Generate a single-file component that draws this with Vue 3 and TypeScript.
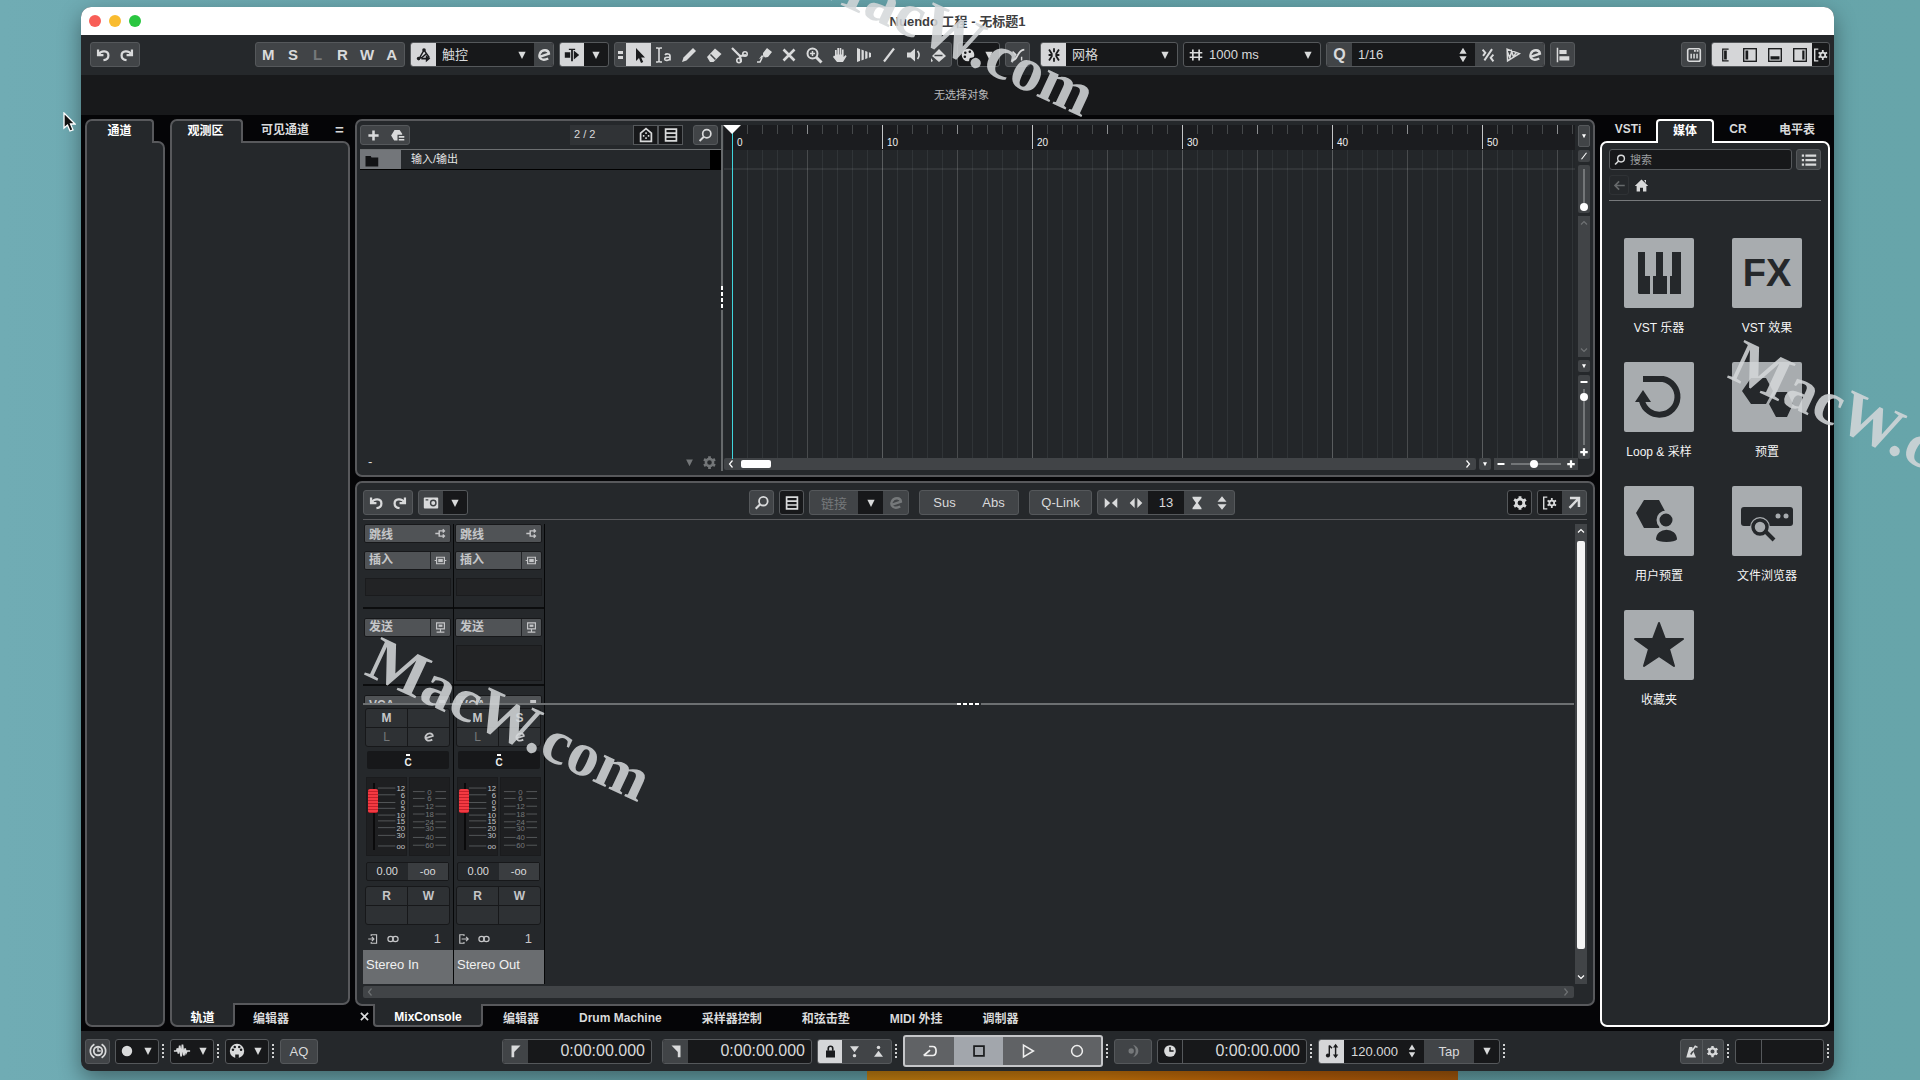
<script setup lang="ts">
import { h, ref } from 'vue'

const icons: Record<string, string> = {
  undo: '<path d="M4.500 4v6h6M5.200 9.400C8 4.500 16 5 16 10.500c0 3.200-2.200 4.800-5.500 5.200" fill="none" stroke="currentColor" stroke-width="2.500"/>',
  redo: '<path d="M15.500 4v6h-6M14.800 9.400C12 4.500 4 5 4 10.500c0 3.200 2.200 4.800 5.500 5.200" fill="none" stroke="currentColor" stroke-width="2.500"/>',
  down: '<path d="M6 6.500h8l-4 8z"/>',
  updown: '<path d="M10 2l4 6.500H6zM10 18l4-6.500H6z"/>',
  auto: '<path d="M4 15 10 4.500 16 13M3 13.500c5 1.500 7-3 9.500-5" fill="none" stroke="currentColor" stroke-width="1.600"/><circle cx="4" cy="14" r="2"/><circle cx="10" cy="4.500" r="2"/><path d="m12 10 5 4-5 4z"/><path d="M7 13h6v2H7z"/>',
  edit: '<path d="M5 12 15.500 8.500C15 3.800 8 3.300 5.500 8.200c-2.300 5 2.500 9.300 9.200 5.600" fill="none" stroke="currentColor" stroke-width="2.600"/>',
  scroll: '<path d="M9 3h2v14H9zM6.500 3h7v1.500h-7zM2 7h6v6H2zM12 5l6 5-6 5z"/>',
  pointer: '<path d="M7 3v13l3-3 2 5 2.200-1-2-4.500H16z"/>',
  rangetool: '<path d="M2 3h2l1 1 1-1h2M2 17h2l1-1 1 1h2M5 4v12" fill="none" stroke="currentColor" stroke-width="1.600"/><path d="M11 10c1-1.500 5-1.500 5 1v4.500M16 12c-4 0-5.500.8-5.300 2.200.4 2 4.300 1.500 5.300-.7" fill="none" stroke="currentColor" stroke-width="1.700"/>',
  pencil: '<path d="m3 17 1.500-4.500L14 3l3 3-9.500 9.500z"/>',
  eraser: '<path d="m3 12 8-8.500L17.500 9l-8 8H6z"/><path d="m6.500 9.500 5 5" stroke="#414447" stroke-width="1.500"/>',
  scissors: '<path d="M3 3l8 8 6-1M11 11l1 6" stroke="currentColor" stroke-width="2.200" fill="none"/><circle cx="16" cy="9" r="2.200" fill="none" stroke="currentColor" stroke-width="1.600"/><circle cx="10" cy="15.500" r="2.200" fill="none" stroke="currentColor" stroke-width="1.600"/>',
  glue: '<path d="m9 8 4-5 5 4-4 5-3 .5-2-2zM8 10l2 2-5 2z"/><path d="M3 17h3l2-4" stroke="currentColor" stroke-width="1.600" fill="none"/>',
  cross: '<path d="m4.500 4.500 11 11m0-11-11 11" stroke="currentColor" stroke-width="2.600"/>',
  zoom: '<circle cx="8.500" cy="8.500" r="5" fill="none" stroke="currentColor" stroke-width="2"/><path d="M12 12l5.500 5.500" stroke="currentColor" stroke-width="3"/><path d="M6 8.500h5M8.500 6v5" stroke="currentColor" stroke-width="1.500"/>',
  hand: '<path d="M6 11V5h1.700v4.500h.6V3H10v6.500h.6V3h1.700v6.500h.6V4.500h1.700V12l2-2 1 1.300-3.600 5.700H8L4 12l1-1.500z"/>',
  comp: '<path d="M3 3l14 5v4L3 17z"/><path d="M6.800 3v14M10.500 4v12M14.200 5v10" stroke="#414447" stroke-width="1.400"/>',
  line: '<path d="m5 16.500 10-13" stroke="currentColor" stroke-width="2.200"/>',
  speaker: '<path d="M3 7.500h3.500L11 3.500v13l-4.500-4H3z"/><path d="M13.500 6c2 2.500 2 5.500 0 8" fill="none" stroke="currentColor" stroke-width="1.600"/>',
  bucket: '<path d="m3 11 7-7 7 7-7 6zM2 13v4l2-1z"/><path d="M5.500 10.500h8" stroke="#414447" stroke-width="1.500"/>',
  palette: '<path d="M10 3a7 7 0 1 0 0 14c2 0 1-2.500 2-3.500s5 .5 5-3.500-3-7-7-7z"/><circle cx="7" cy="7.500" r="1.400" fill="#17181a"/><circle cx="12" cy="6.500" r="1.400" fill="#17181a"/><circle cx="6.500" cy="12" r="1.400" fill="#17181a"/>',
  curve: '<path d="M3 16c8 0 5-11 14-12" fill="none" stroke="currentColor" stroke-width="2"/><path d="M4 6l4 4M14 12v4" stroke="currentColor" stroke-width="1.600"/>',
  snap: '<path d="M10 2.500v4.500m0 6v4.500M4.500 4l3 4.500v3l-3 4.500M15.500 4l-3 4.500v3l3 4.500M4 10h4m4 0h4" fill="none" stroke="currentColor" stroke-width="2"/>',
  hash: '<path d="M6.500 4v12M13.500 4v12M3 7.500h14M3 12.500h14" stroke="currentColor" stroke-width="1.900"/>',
  swing: '<path d="m6 16 8.500-12.500M4 4l3 3.500L4.500 11M16 9.500 13 13l3 4" fill="none" stroke="currentColor" stroke-width="2.200"/>',
  soft: '<path d="M3.500 3.500 17 8.500 9 13.500 4 16.500zM3.500 6l3 7 2-7 2 6 3-5" fill="none" stroke="currentColor" stroke-width="1.700"/>',
  align: '<path d="M3 2h1.700v16H3zM6 4.500h8V9H6zM6 11.500h11V16H6z"/>',
  keys: '<rect x="3" y="3" width="14" height="14" rx="2" fill="none" stroke="currentColor" stroke-width="1.800"/><path d="M6 8.500h1.700V14H6zM9.200 8.500h1.700V14H9.200zM12.500 8.500h1.700V14h-1.700zM10 4.500h2v2h-2zM13 4.500h2v2h-2z"/>',
  zoneA: '<path d="M14 3.500H7.500v13H14" fill="none" stroke="currentColor" stroke-width="1.400"/><path d="M9 5h3v10H9z"/>',
  zoneB: '<rect x="3" y="3" width="14" height="14" fill="none" stroke="currentColor" stroke-width="1.500"/><path d="M5 5h3v10H5z"/>',
  zoneC: '<rect x="3" y="3" width="14" height="14" fill="none" stroke="currentColor" stroke-width="1.500"/><path d="M5 11.500h10V15H5z"/>',
  zoneD: '<rect x="3" y="3" width="14" height="14" fill="none" stroke="currentColor" stroke-width="1.500"/><path d="M12.500 5H15v10h-2.500z"/>',
  setup: '<path d="M7 3.500H3v13h4" fill="none" stroke="currentColor" stroke-width="1.600"/><circle cx="12" cy="10" r="2.700" fill="none" stroke="currentColor" stroke-width="2"/><path d="M12 4.500v2.500M12 13v2.500M7.300 7.300l2.100 1.200M14.600 11.500l2.100 1.200M7.300 12.700l2.100-1.200M14.600 8.500l2.100-1.200" stroke="currentColor" stroke-width="2"/>',
  gear: '<circle cx="10" cy="10" r="4.200" fill="none" stroke="currentColor" stroke-width="3"/><path d="M10 2.500v3M10 14.500v3M3.500 6.200l2.600 1.600M13.900 12.200l2.600 1.600M3.500 13.800l2.600-1.600M13.900 7.800l2.600-1.600" stroke="currentColor" stroke-width="3.200"/>',
  plus: '<path d="M10 4v12M4 10h12" stroke="currentColor" stroke-width="3"/>',
  minus: '<path d="M3 10h14" stroke="currentColor" stroke-width="4"/>',
  plusBold: '<path d="M10 2.500v15M2.500 10h15" stroke="currentColor" stroke-width="4.500"/>',
  preset: '<path d="M6.500 3.500h6L15.500 8v1H10v7H6L2.500 10z"/><path d="M11.500 10.500H18v2h-6.500zM11.500 14H18v2h-6.500z"/>',
  agent: '<path d="M4 17V8l6-5 6 5v9z" fill="none" stroke="currentColor" stroke-width="1.900"/><path d="M9.200 7h1.700v2H9.200zM6.500 10h1.700v2H6.500zM9.200 12.500h1.700v2H9.200zM12 10h1.700v2H12z"/>',
  list: '<path d="M4 3.500h12v13H4zM4 7.800h12M4 12.200h12" fill="none" stroke="currentColor" stroke-width="1.900"/>',
  search: '<circle cx="11.500" cy="8" r="4.800" fill="none" stroke="currentColor" stroke-width="2"/><path d="m8 11.500-5 5" stroke="currentColor" stroke-width="2.300"/>',
  folder: '<path d="M2 4h7l1 2h9v12H2z"/>',
  bullets: '<path d="M2 4h2.500v2.500H2zM2 9h2.500v2.500H2zM2 14h2.500v2.500H2zM6 4h12v2.500H6zM6 9h12v2.500H6zM6 14h12v2.500H6z"/>',
  back: '<path d="M17 10H4M9.500 4.500 4 10l5.500 5.500" fill="none" stroke="currentColor" stroke-width="2.200"/>',
  home: '<path d="m10 2 9 8.500h-2.500V18H12v-5H8v5H3.500v-7.500H1zM13.500 2.500H16V7z"/>',
  camera: '<rect x="2" y="4" width="16" height="12" rx="1"/><circle cx="12.500" cy="10" r="3" fill="none" stroke="#414447" stroke-width="1.600"/><path d="M4 6.500h3" stroke="#414447" stroke-width="1.500"/>',
  narrow: '<path d="M3 4.500 9 10l-6 5.500zM17 4.500 11 10l6 5.500z"/>',
  widen: '<path d="M8.500 4.500v11L3 10zM11.500 4.500v11L17 10z"/>',
  shrink: '<path d="M5 3h10v1.500L11 10l4 5.500V17H5v-1.500L9 10 5 4.500z"/>',
  grow: '<path d="M10 2.500 15 8.500H5zM10 17.500l5-6H5z"/>',
  expand: '<path d="M5.500 4.500h10v10M15 5 5 15.500" fill="none" stroke="currentColor" stroke-width="2.800"/>',
  route: '<path d="M2 10h5M16 6H8v8h8M13.500 3.500 16 6l-2.500 2.500M13.500 11.500 16 14l-2.500 2.500" fill="none" stroke="currentColor" stroke-width="2.200"/>',
  insert: '<path d="M1 10h3m12 0h3M4 5h12v10H4z" fill="none" stroke="currentColor" stroke-width="1.800"/><path d="M6.500 7.500h7v5h-7z"/>',
  send: '<path d="M4 3h12v9H4zM10 12v4M4 17h12" fill="none" stroke="currentColor" stroke-width="1.800"/><path d="M7 5.500h6V9H7z"/>',
  chain: '<path d="M2 8l4 3-4 3zM8 3h9v14H8z"/>',
  inputIcon: '<path d="M7 5V3h9v14H7v-2M2 10h9M8 6.500 11.500 10 8 13.500" fill="none" stroke="currentColor" stroke-width="1.900"/>',
  outputIcon: '<path d="M10 5V3H3v14h7v-2M6 10h11M13.500 6.500 17 10l-3.500 3.500" fill="none" stroke="currentColor" stroke-width="1.900"/>',
  stereo: '<circle cx="6" cy="10" r="4.500" fill="none" stroke="currentColor" stroke-width="2"/><circle cx="14" cy="10" r="4.500" fill="none" stroke="currentColor" stroke-width="2"/>',
  left: '<path d="m13 3-6 7 6 7" fill="none" stroke="currentColor" stroke-width="2.400"/>',
  right: '<path d="m7 3 6 7-6 7" fill="none" stroke="currentColor" stroke-width="2.400"/>',
  up: '<path d="m4 13 6-6 6 6" fill="none" stroke="currentColor" stroke-width="2.400"/>',
  chevron: '<path d="m4 7 6 6 6-6" fill="none" stroke="currentColor" stroke-width="2.400"/>',
  timer: '<path d="M6 2.500c-6 3.500-6 11.500 0 15M14 2.500c6 3.500 6 11.500 0 15" fill="none" stroke="currentColor" stroke-width="1.900"/><circle cx="10" cy="10" r="4.700" fill="none" stroke="currentColor" stroke-width="2"/><path d="M10 6.500V10h3" fill="none" stroke="currentColor" stroke-width="1.600"/>',
  dot: '<circle cx="10" cy="10" r="5.800"/>',
  wave: '<path d="M1 10h3l1-3 1 6 1.500-9 1.500 12L10.500 3 12 15l1.500-8 1 5 1-2H19" fill="none" stroke="currentColor" stroke-width="1.900"/>',
  midi: '<circle cx="10" cy="10" r="8"/><g fill="#17181a"><circle cx="5.500" cy="8.500" r="1.400"/><circle cx="7.500" cy="5.500" r="1.400"/><circle cx="12.500" cy="5.500" r="1.400"/><circle cx="14.500" cy="8.500" r="1.400"/><path d="M8 14h4v4H8z"/></g>',
  locL: '<path d="M5 4h10L8 11v6H5z"/>',
  locR: '<path d="M15 4H5l7 7v6h3z"/>',
  lock: '<path d="M4 8.500h12V18H4z"/><path d="M7 9V6c0-4 6-4 6 0v3" fill="none" stroke="currentColor" stroke-width="2.200"/>',
  punchIn: '<path d="M4 3h12l-6 8z"/><circle cx="10" cy="15.500" r="2.300"/>',
  punchOut: '<path d="M4 17h12l-6-8z"/><circle cx="10" cy="4.500" r="2.300"/>',
  cycle: '<path d="M3 15h10c5 0 5-10 0-10H9M3 15l7-6" fill="none" stroke="currentColor" stroke-width="1.900"/>',
  stop: '<path d="M4.500 4.500h11v11h-11z" fill="none" stroke="currentColor" stroke-width="1.900"/>',
  play: '<path d="m5 3.500 11 6.500-11 6.500z" fill="none" stroke="currentColor" stroke-width="1.700"/>',
  record: '<circle cx="10" cy="10" r="6" fill="none" stroke="currentColor" stroke-width="1.700"/>',
  pre: '<circle cx="8" cy="10" r="3"/><path d="M10 3c8 2 8 12 0 14 4-4 4-10 0-14z"/>',
  clock: '<circle cx="10" cy="10" r="6.500"/><path d="M10 5.500V10h4" fill="none" stroke="#17181a" stroke-width="1.600"/>',
  tempo: '<path d="M7 4v11M7 4l3 3M14 4v12" stroke="currentColor" stroke-width="1.600" fill="none"/><circle cx="5.500" cy="15" r="2.300"/><path d="m14 2 3 4h-6zM14 18l3-4h-6z"/>',
  metro: '<path d="M7 4h4l2 7 3 7H3z"/><path d="m9 14 6.500-10" fill="none" stroke="#414447" stroke-width="2"/><path d="m11 9 4-6 3 1.500" fill="none" stroke="currentColor" stroke-width="2"/>',
}

const Icon = (props: { n: string }) =>
  h('svg', { viewBox: '0 0 20 20', class: 'icon', fill: 'currentColor', 'aria-hidden': 'true', innerHTML: icons[props.n] })
Icon.props = ['n']

const tileArt: Record<string, string> = {
  piano: '<path d="M14 14h7v24h5v18H15l-1-1zM35 14h4v24h4v18H29V38h3V14zM50 14h7v42H46V38h2V14z"/>',
  loop: '<path d="M19 17h20a18 18 0 1 1-21 22" fill="none" stroke="currentColor" stroke-width="6"/><path d="m11 40 8-12 8 12zM19 14h10l-4 6z"/>',
  presets: '<path d="M19 16h15l7 13-7 13H19l-9-13zM44 30h11l6 12-6 13H44l-7-13z"/>',
  user: '<path d="M20 14h15l7 13-7 15H20l-8-15z"/><circle cx="42" cy="34" r="8" stroke="#a8acaf" stroke-width="3"/><path d="M31 54c0-15 23-15 23 0-4 4-19 4-23 0z" stroke="#a8acaf" stroke-width="2"/>',
  browser: '<rect x="9" y="21" width="52" height="19" rx="3"/><circle cx="46" cy="30" r="2.500" fill="#a8acaf"/><circle cx="54" cy="30" r="2.500" fill="#a8acaf"/><circle cx="28" cy="41" r="10" fill="#a8acaf"/><circle cx="28" cy="41" r="7" fill="none" stroke="currentColor" stroke-width="3.500"/><path d="m33 45 9 9" stroke="currentColor" stroke-width="4"/>',
  star: '<path d="m35 13 6 16h18L45 39l5 17-15-10-15 10 5-17-14-10h18z" stroke="currentColor" stroke-width="2" stroke-linejoin="round"/>',
}

const autoModes = ['M', 'S', 'L', 'R', 'W', 'A']
const tools = ['pointer', 'rangetool', 'pencil', 'eraser', 'scissors', 'glue', 'cross', 'zoom', 'hand', 'comp', 'line', 'speaker', 'bucket']
const bars = [0, 10, 20, 30, 40, 50]
const rightTabs = ['VSTi', '媒体', 'CR', '电平表']
const lowerTabs = ['编辑器', 'Drum Machine', '采样器控制', '和弦击垫', 'MIDI 外挂', '调制器']
const tiles = [
  { art: 'piano', label: 'VST 乐器' },
  { art: '', label: 'VST 效果' },
  { art: 'loop', label: 'Loop & 采样' },
  { art: 'presets', label: '预置' },
  { art: 'user', label: '用户预置' },
  { art: 'browser', label: '文件浏览器' },
  { art: 'star', label: '收藏夹' },
]
const channels = [
  { name: 'Stereo In', solo: '', sends: false, io: 'inputIcon' },
  { name: 'Stereo Out', solo: 'S', sends: true, io: 'outputIcon' },
]
const faderMarks = [['12', 9], ['6', 16], ['0', 24], ['5', 30], ['10', 37], ['15', 43], ['20', 50], ['30', 58], ['oo', 69]]
const meterMarks = [['0', 13], ['6', 20], ['12', 28], ['18', 36], ['24', 44], ['30', 50], ['40', 60], ['60', 68]]
const marks = ['mark-top', 'mark-mixer', 'mark-media']
const active = ref('媒体')
</script>

<template>
  <div class="desktop">
    <div class="wallpaper-art"></div>
    <div class="window">
      <header class="titlebar">
        <i class="light red"></i><i class="light amber"></i><i class="light green"></i>
        <h1>Nuendo 工程 - 无标题1</h1>
      </header>

      <div class="toolbar">
        <div class="group history">
          <button aria-label="撤销"><Icon n="undo" /></button>
          <button aria-label="重做"><Icon n="redo" /></button>
        </div>
        <div class="group modes">
          <button v-for="m in autoModes" :key="m" :class="{ dim: m === 'L' }">{{ m }}</button>
        </div>
        <div class="group dark auto">
          <button class="cell lit" aria-label="自动化"><Icon n="auto" /></button>
          <div class="pick"><select aria-label="自动化模式"><option>触控</option></select><Icon n="down" /></div>
          <button class="narrow grey" aria-label="自动化面板"><Icon n="edit" /></button>
        </div>
        <div class="group dark pair">
          <button class="lit" aria-label="自动滚动"><Icon n="scroll" /></button>
          <button aria-label="自动滚动设置"><Icon n="down" /></button>
        </div>
        <div class="group tools">
          <span class="handle"><i></i><i></i></span>
          <button v-for="t in tools" :key="t" class="cell" :class="{ lit: t === 'pointer' }" :aria-label="t"><Icon :n="t" /></button>
        </div>
        <div class="group dark colour">
          <button aria-label="颜色"><Icon n="palette" /></button>
          <button aria-label="颜色菜单"><Icon n="down" /></button>
        </div>
        <div class="group single zero"><button aria-label="零交叉点"><Icon n="curve" /></button></div>
        <div class="group dark snap">
          <button class="cell lit" aria-label="吸附"><Icon n="snap" /></button>
          <div class="pick"><select aria-label="吸附类型"><option>网格</option></select><Icon n="down" /></div>
        </div>
        <div class="group dark snap">
          <Icon n="hash" class="lead" />
          <div class="pick tight"><select aria-label="网格类型"><option>1000 ms</option></select><Icon n="down" /></div>
        </div>
        <div class="group dark quant">
          <button class="cell grey">Q</button>
          <div class="pick"><select aria-label="量化"><option>1/16</option></select><Icon n="updown" /></div>
          <button class="cell grey" aria-label="摇摆"><Icon n="swing" /></button>
          <button class="cell grey" aria-label="软量化"><Icon n="soft" /></button>
          <button class="narrow grey" aria-label="量化面板"><Icon n="edit" /></button>
        </div>
        <div class="group single"><button aria-label="对齐"><Icon n="align" /></button></div>
        <div class="push"></div>
        <div class="group single"><button aria-label="键盘"><Icon n="keys" /></button></div>
        <div class="group dark zones">
          <button v-for="z in ['zoneA', 'zoneB', 'zoneC', 'zoneD']" :key="z" class="cell lit" :aria-label="z"><Icon :n="z" /></button>
          <button class="rest" aria-label="窗口布局"><Icon n="setup" /></button>
        </div>
      </div>

      <div class="infoline">无选择对象</div>

      <main class="zones-grid">
        <section class="side">
          <nav class="tabs"><button class="tab on short">通道</button></nav>
          <div class="body flush"></div>
        </section>

        <section class="side">
          <nav class="tabs">
            <button class="tab on mid">观测区</button>
            <button class="tab wide">可见通道</button>
            <button class="tab equal">=</button>
          </nav>
          <div class="body flush flush-bottom"></div>
          <nav class="tabs under">
            <button class="tab on">轨道</button>
            <button class="tab">编辑器</button>
          </nav>
        </section>

        <div class="centre">
          <section class="panel project">
            <div class="tracks">
              <div class="track-tools">
                <div class="group history">
                  <button aria-label="添加音轨"><Icon n="plus" /></button>
                  <button aria-label="音轨预置"><Icon n="preset" /></button>
                </div>
                <div class="counter">
                  <span>2 / 2</span>
                  <button class="cell" aria-label="可见性"><Icon n="agent" /></button>
                  <button class="cell" aria-label="列表"><Icon n="list" /></button>
                </div>
                <div class="group single"><button aria-label="查找音轨"><Icon n="search" /></button></div>
              </div>
              <div class="track"><span class="chip"><Icon n="folder" /></span><span class="track-name">输入/输出</span><i></i></div>
              <div class="track-foot"><span>-</span><Icon n="down" /><Icon n="gear" /></div>
            </div>
            <div class="split-v"><i></i></div>
            <div class="arrange">
              <div class="ruler">
                <span v-for="b in bars" :key="b">{{ b }}</span>
              </div>
              <div class="events"><div class="lane"></div></div>
              <div class="hbar">
                <div class="scroll-h"><Icon n="left" /><b></b><Icon n="right" class="last" /></div>
                <button class="mini" aria-label="缩放预置"><Icon n="down" /></button>
                <div class="zoom-h"><Icon n="minus" /><input type="range" min="0" max="100" value="45" aria-label="水平缩放" /><Icon n="plusBold" /></div>
              </div>
              <div class="playhead"></div>
            </div>
            <div class="vbar">
              <button class="mini tall" aria-label="标尺菜单"><Icon n="down" /></button>
              <button class="mini" aria-label="绘制"><Icon n="line" /></button>
              <div class="wave-zoom"><input type="range" min="0" max="100" value="0" aria-label="波形缩放" /></div>
              <div class="scroll-v"><Icon n="up" /><Icon n="chevron" /></div>
              <button class="mini" aria-label="垂直缩放预置"><Icon n="down" /></button>
              <div class="zoom-v"><Icon n="minus" /><input type="range" min="0" max="100" value="92" aria-label="垂直缩放" /><Icon n="plusBold" /></div>
            </div>
          </section>

          <section class="lower">
            <div class="panel mixer">
              <div class="mix-tools">
                <div class="mix-left">
                  <div class="group history">
                    <button aria-label="撤销"><Icon n="undo" /></button>
                    <button aria-label="重做"><Icon n="redo" /></button>
                  </div>
                  <div class="group pair">
                    <button aria-label="快照"><Icon n="camera" /></button>
                    <button class="black" aria-label="快照菜单"><Icon n="down" /></button>
                  </div>
                </div>
                <div class="mix-mid">
                  <div class="group single"><button aria-label="查找通道"><Icon n="search" /></button></div>
                  <div class="group dark single"><button aria-label="通道列表"><Icon n="list" /></button></div>
                  <div class="group link">
                    <button class="dim">链接</button>
                    <button class="cell black" aria-label="链接菜单"><Icon n="down" /></button>
                    <button class="cell dim" aria-label="链接设置"><Icon n="edit" /></button>
                  </div>
                  <div class="group sus"><button>Sus</button><button>Abs</button></div>
                  <div class="group qlink"><button>Q-Link</button></div>
                  <div class="group width">
                    <button class="cell" aria-label="变窄"><Icon n="narrow" /></button>
                    <button class="cell" aria-label="变宽"><Icon n="widen" /></button>
                    <output>13</output>
                    <button class="cell" aria-label="收缩机架"><Icon n="shrink" /></button>
                    <button class="cell" aria-label="展开机架"><Icon n="grow" /></button>
                  </div>
                </div>
                <div class="mix-right">
                  <div class="group dark single"><button aria-label="功能菜单"><Icon n="gear" /></button></div>
                  <div class="group pair">
                    <button class="black" aria-label="设置布局"><Icon n="setup" /></button>
                    <button aria-label="打开窗口"><Icon n="expand" /></button>
                  </div>
                </div>
              </div>

              <div class="mix-body">
                <div class="mix-main">
                  <div class="racks">
                    <div v-for="c in channels" :key="c.name" class="strip">
                      <div class="rack"><span>跳线</span><Icon n="route" /></div>
                      <div class="rack split inserts"><span>插入</span><Icon n="insert" /></div>
                      <div class="slot"></div>
                      <hr class="rule" />
                      <div class="rack split"><span>发送</span><Icon n="send" /></div>
                      <div class="slot big" :class="{ none: !c.sends }"></div>
                      <hr class="rule" />
                      <div class="rack"><span>VCA</span><Icon n="chain" /></div>
                    </div>
                  </div>
                  <div class="split-h"><i></i></div>
                  <div class="faders">
                    <div v-for="c in channels" :key="c.name" class="strip">
                      <div class="quad">
                        <button>M</button><button>{{ c.solo }}</button>
                        <button class="dim">L</button><button aria-label="编辑通道"><Icon n="edit" /></button>
                      </div>
                      <div class="pan"><i></i>C</div>
                      <div class="level">
                        <div class="fader">
                          <input type="range" min="0" max="100" value="86" :aria-label="c.name" />
                          <svg viewBox="0 0 29 79">
                            <g v-for="[t, y] in faderMarks" :key="t">
                              <path :d="`M0 ${y}h18`" /><text x="28" :y="Number(y) + 3" text-anchor="end">{{ t }}</text>
                            </g>
                          </svg>
                        </div>
                        <div class="meter">
                          <svg viewBox="0 0 40 74">
                            <g v-for="[t, y] in meterMarks" :key="t">
                              <path :d="`M3 ${y}h12M26 ${y}h11`" /><text x="20" :y="Number(y) + 3" text-anchor="middle">{{ t }}</text>
                            </g>
                          </svg>
                        </div>
                      </div>
                      <div class="values"><span>0.00</span><span>-oo</span></div>
                      <div class="quad"><button>R</button><button>W</button><span></span><span></span></div>
                      <div class="io"><Icon :n="c.io" /><Icon n="stereo" /><span>1</span></div>
                      <div class="name">{{ c.name }}</div>
                    </div>
                  </div>
                  <div class="scroll-h faint"><Icon n="left" /><Icon n="right" class="last" /></div>
                </div>
                <div class="mix-scroll"><Icon n="up" /><b></b><Icon n="chevron" /></div>
              </div>
            </div>
            <nav class="tabs under lower-tabs">
              <button class="close" aria-label="关闭"><Icon n="cross" /></button>
              <button class="tab on mix-tab">MixConsole</button>
              <button v-for="t in lowerTabs" :key="t" class="tab">{{ t }}</button>
            </nav>
          </section>
        </div>

        <section class="side media">
          <nav class="tabs">
            <button v-for="t in rightTabs" :key="t" class="tab" :class="{ on: t === active }" @click="active = t">{{ t }}</button>
          </nav>
          <div class="body">
            <div class="search-row">
              <label class="search"><Icon n="search" /><input type="text" placeholder="搜索" aria-label="搜索" /></label>
              <div class="group list-btn"><button aria-label="结果列表"><Icon n="bullets" /></button></div>
            </div>
            <div class="crumbs">
              <button class="back" aria-label="返回"><Icon n="back" /></button>
              <button class="home" aria-label="主页"><Icon n="home" /></button>
            </div>
            <div class="tiles">
              <button v-for="t in tiles" :key="t.label" class="tile">
                <svg v-if="t.art" viewBox="0 0 70 70" fill="currentColor" v-html="tileArt[t.art]"></svg>
                <span v-else class="fx">FX</span>
                <span>{{ t.label }}</span>
              </button>
            </div>
          </div>
        </section>
      </main>

      <footer class="transport">
        <div class="group single"><button aria-label="性能"><Icon n="timer" /></button></div>
        <div class="group dark duo"><button aria-label="录音模式"><Icon n="dot" /></button><button aria-label="录音菜单"><Icon n="down" /></button></div>
        <i class="grip"></i>
        <div class="group dark duo"><button aria-label="音频模式"><Icon n="wave" /></button><button aria-label="音频菜单"><Icon n="down" /></button></div>
        <i class="grip"></i>
        <div class="group dark duo"><button aria-label="MIDI 模式"><Icon n="midi" /></button><button aria-label="MIDI 菜单"><Icon n="down" /></button></div>
        <i class="grip"></i>
        <div class="group aq"><button>AQ</button></div>
        <div class="group dark time locator"><button class="cell grey" aria-label="左定位点"><Icon n="locL" /></button><input type="text" value="0:00:00.000" aria-label="左定位" /></div>
        <div class="group dark time right-locator"><button class="cell grey" aria-label="右定位点"><Icon n="locR" /></button><input type="text" value="0:00:00.000" aria-label="右定位" /></div>
        <div class="group lockset">
          <button class="lit" aria-label="锁定"><Icon n="lock" /></button>
          <button aria-label="切入"><Icon n="punchIn" /></button>
          <button aria-label="切出"><Icon n="punchOut" /></button>
        </div>
        <i class="grip"></i>
        <div class="group keys">
          <button aria-label="循环"><Icon n="cycle" /></button>
          <button class="pressed" aria-label="停止"><Icon n="stop" /></button>
          <button aria-label="播放"><Icon n="play" /></button>
          <button aria-label="录音"><Icon n="record" /></button>
        </div>
        <i class="grip"></i>
        <div class="group aq dim pre"><button aria-label="预卷"><Icon n="pre" /></button></div>
        <div class="group dark time"><button class="cell ruled" aria-label="时间格式"><Icon n="clock" /></button><input type="text" value="0:00:00.000" aria-label="时间" /></div>
        <i class="grip"></i>
        <div class="group dark tempo">
          <button class="cell lit" aria-label="速度轨"><Icon n="tempo" /></button>
          <input type="text" value="120.000" aria-label="速度" /><Icon n="updown" class="step" />
          <button class="tap grey">Tap</button>
          <button class="cell" aria-label="速度菜单"><Icon n="down" /></button>
        </div>
        <i class="grip"></i>
        <div class="push"></div>
        <div class="group metro"><button aria-label="节拍器"><Icon n="metro" /></button><button aria-label="节拍器设置"><Icon n="gear" /></button></div>
        <i class="grip"></i>
        <div class="group dark monitor"><span></span><span></span></div>
        <i class="grip end"></i>
      </footer>
    </div>

    <svg class="cursor" viewBox="0 0 14 20"><path d="M2 1v15l3.500-3 2.500 6 3-1.200-2.500-5.800H13z" fill="#111" stroke="#fff" stroke-width="1.300" /></svg>
    <div v-for="m in marks" :key="m" class="mark" :class="m">MacW.com</div>
  </div>
</template>

<style>
html, body { margin: 0; }
</style>

<style scoped>
* { box-sizing: border-box; }
.desktop {
  position: relative;
  display: flex;
  height: 100vh;
  min-height: 900px;
  padding: 7px 86px 9px 81px;
  overflow: hidden;
  background: linear-gradient(90deg, #70acb4, #64a2a9 50%, #67a5aa);
  font: 13px "Liberation Sans", "Noto Sans CJK SC", sans-serif;
  color: #d9dadb;
}
.wallpaper-art {
  position: absolute;
  left: 867px;
  right: 462px;
  bottom: 0;
  height: 14px;
  background: linear-gradient(90deg, #c98412, #d07a0c 40%, #c06208 70%, #a85a0c);
}
.window {
  position: relative;
  display: flex;
  flex: 1;
  flex-direction: column;
  min-width: 0;
  overflow: hidden;
  border-radius: 10px;
  background: #25282b;
  box-shadow: 0 8px 22px rgba(0, 0, 0, .4);
}
button, input, select, output { font: inherit; color: inherit; }
button {
  display: flex;
  align-items: center;
  justify-content: center;
  min-width: 0;
  padding: 0;
  border: 0;
  background: none;
  white-space: nowrap;
}
.icon { display: block; flex: none; width: 18px; height: 18px; }

.titlebar { display: flex; flex: none; align-items: center; height: 28px; padding-left: 8px; background: #fff; }
.titlebar h1 { flex: 1; margin: 0; padding: 0 68px 2px 0; text-align: center; font-size: 13px; color: #3e3e40; }
.light { width: 12px; height: 12px; margin-right: 8px; border-radius: 50%; }
.red { background: #f85e57; }
.amber { background: #f9bc30; }
.green { background: #2ac640; }

.group {
  display: flex;
  flex: none;
  height: 25px;
  overflow: hidden;
  border: 1px solid #55585b;
  border-radius: 3px;
  background: #414447;
}
.group > button { flex: 1; }
.group > .cell { flex: 0 0 25px; }
.group > .narrow { flex: 0 0 19px; }
.dark { background: #17181a; }
.black { background: #17181a; }
.grey { background: #414447; }
.lit { background: #d5d6d8; color: #1a1b1d; }
.dim { color: #75787a; }
.history, .pair { width: 50px; }
.single { width: 25px; }
.push { flex: 1; }

.toolbar { display: flex; flex: none; height: 40px; padding: 7px 4px 0 9px; gap: 5px; }
.modes { width: 150px; margin-left: 110px; font-weight: bold; font-size: 15px; }
.auto { width: 144px; }
.tools { width: 338px; }
.tools .icon { width: 20px; height: 20px; }
.handle { display: flex; flex: 1; flex-direction: column; align-items: center; justify-content: center; gap: 2px; }
.handle i { width: 5px; height: 3px; background: #d9dadb; }
.colour { width: 43px; }
.zero { margin-right: 5px; }
.snap { width: 138px; }
.quant { width: 219px; }
.quant .cell { font-size: 16px; font-weight: bold; }
.zones { width: 119px; }
.zones .rest { flex: 1; }
.pick { display: grid; flex: 1; align-items: center; min-width: 0; }
.pick > * { grid-area: 1 / 1; }
.pick select { width: 100%; height: 100%; padding: 0 6px; border: 0; background: none; appearance: none; }
.pick .icon { justify-self: end; margin-right: 3px; pointer-events: none; }
.pick.tight select { padding: 0 4px; }
.lead { align-self: center; margin-left: 3px; }

.infoline { flex: none; height: 40px; padding-left: 8px; background: #18191b; text-align: center; line-height: 40px; font-size: 11px; color: #b9babb; }

.zones-grid {
  display: grid;
  flex: 1;
  grid-template-columns: 80px 180px minmax(0, 1fr) 230px;
  gap: 5px;
  min-height: 0;
  padding: 4px;
  background: #050507;
}
.side { display: flex; flex-direction: column; min-height: 0; }
.tabs { display: flex; flex: none; height: 22px; font-size: 12px; font-weight: bold; }
.tab { padding: 0 18px 3px; font-weight: bold; }
.tab.on {
  position: relative;
  z-index: 1;
  height: 24px;
  padding: 0 0 6px;
  border: 2px solid #58595c;
  border-bottom: 0;
  border-radius: 7px 4px 0 0;
  background: #25282b;
  color: #fff;
}
.tab.short { width: 69px; }
.tab.mid { width: 73px; padding-right: 2px; }
.tab.wide { width: 84px; padding: 0 0 3px; }
.tab.equal { padding: 0 0 2px 8px; font-size: 15px; }
.body { flex: 1; min-height: 0; border: 2px solid #58595c; border-radius: 7px; background: #25282b; }
.body.flush { border-top-left-radius: 0; }
.body.flush-bottom { border-bottom-left-radius: 0; }
.under .tab { padding: 2px 18px 0; }
.under .tab.on {
  width: 65px;
  margin-top: -2px;
  padding: 4px 0 0;
  border-top: 0;
  border-bottom: 2px solid #58595c;
  border-radius: 0 0 4px 7px;
}

.centre { display: grid; grid-template-rows: minmax(0, 358fr) minmax(0, 546fr); grid-template-columns: minmax(0, 1fr); gap: 4px; min-height: 0; }
.panel { min-width: 0; min-height: 0; border: 2px solid #58595c; border-radius: 7px; background: #25282b; }
.project { display: flex; padding: 4px 3px; }
.tracks { display: flex; flex: none; flex-direction: column; width: 361px; }
.track-tools { display: flex; height: 24px; }
.track-tools .group { height: 20px; }
.track-tools .group .icon { width: 17px; height: 17px; }
.counter { display: flex; width: 113px; height: 20px; margin: 0 10px 0 160px; background: #303336; font-size: 11px; }
.counter span { flex: 1; padding-left: 4px; line-height: 19px; }
.counter .cell { width: 25px; border: 1px solid #55585b; background: #17181a; }
.track { display: flex; height: 21px; border-top: 1px solid #6c6f71; border-bottom: 1px solid #000; font-size: 11px; }
.chip { display: flex; align-items: end; width: 41px; padding: 0 0 1px 4px; background: #73767a; color: #121315; }
.chip .icon { width: 15px; height: 15px; }
.track-name { flex: 1; padding-left: 10px; line-height: 18px; color: #e6e6e6; }
.track i { width: 11px; background: #000; }
.track-foot { display: flex; gap: 3px; margin-top: auto; padding: 0 3px 0 8px; color: #737678; }
.track-foot span { flex: 1; color: #ddd; }
.track-foot .icon { width: 17px; height: 17px; }
.split-v { display: flex; flex: none; align-items: center; width: 2px; background: #66696b; }
.split-v i { width: 2px; height: 24px; background: repeating-linear-gradient(#fff 0 4px, #25282b 4px 6px); }
.arrange { position: relative; display: flex; flex: 1; flex-direction: column; min-width: 0; margin: 0 0 1px 1px; }
.ruler {
  display: flex;
  flex: none;
  height: 25px;
  margin-right: 3px;
  padding-left: 8px;
  overflow: hidden;
  background: #1b1c1f;
  font-size: 10px;
  color: #f0f0f0;
}
.ruler span {
  flex: 0 0 150px;
  height: 24px;
  padding: 12px 0 0 4px;
  border-left: 1px solid #c5c6c7;
  background:
    linear-gradient(#8b8d8f, #8b8d8f) 74px 0 / 1px 9px no-repeat,
    repeating-linear-gradient(90deg, transparent 0 14px, #45484a 14px 15px) 0 0 / 100% 9px no-repeat;
}
.events {
  flex: 1;
  margin-right: 3px;
  padding-top: 18px;
  background:
    repeating-linear-gradient(90deg, #595c5e 0 1px, transparent 1px 150px) 8px 0,
    repeating-linear-gradient(90deg, #484b4d 0 1px, transparent 1px 75px) 8px 0,
    repeating-linear-gradient(90deg, #303437 0 1px, transparent 1px 15px) 8px 0,
    #232629;
}
.lane { height: 2px; background: rgba(255, 255, 255, .07); }
.playhead { position: absolute; top: 0; bottom: 11px; left: 8px; width: 1px; background: #3fd5dc; }
.playhead::before {
  content: "";
  position: absolute;
  top: 0;
  left: -9px;
  border: 9px solid transparent;
  border-top-color: #fff;
  border-bottom: 0;
}
.hbar { display: flex; flex: none; height: 12px; gap: 3px; }
.hbar .icon, .vbar .icon { width: 10px; height: 10px; }
.scroll-h { display: flex; flex: 1; align-items: center; gap: 5px; height: 12px; padding: 0 3px 0 2px; border-radius: 2px; background: #414447; color: #fff; }
.scroll-h .icon { width: 10px; height: 10px; }
.scroll-h b { width: 30px; height: 8px; border-radius: 2px; background: #fff; }
.scroll-h .last { margin-left: auto; }
.scroll-h.faint { flex: none; margin-top: 2px; color: #6f7274; }
.mini { width: 12px; height: 12px; border-radius: 2px; background: #414447; color: #fff; }
.tall { height: 22px; border: 1px solid #55585b; }
.zoom-h { display: flex; align-items: center; gap: 5px; width: 84px; padding: 0 2px; background: #414447; color: #fff; }
.vbar { display: flex; flex: none; flex-direction: column; gap: 3px; width: 12px; padding-bottom: 12px; color: #fff; }
.vbar > * { flex: none; }
.wave-zoom, .zoom-v { display: flex; flex-direction: column; align-items: center; gap: 2px; border-radius: 2px; background: #414447; }
.wave-zoom { height: 48px; padding: 4px 0 2px; }
.zoom-v { height: 84px; padding: 2px 0; }
.vbar .scroll-v { display: flex; flex: 1; flex-direction: column; align-items: center; justify-content: space-between; padding: 2px 0; background: #414447; color: #6f7274; }
input[type="range"] { min-width: 0; margin: 0; appearance: none; background: none; }
.zoom-h input { flex: 1; width: 0; height: 10px; background: linear-gradient(#737678, #737678) center / 100% 2px no-repeat; }
.wave-zoom input, .zoom-v input, .fader input { flex: 1; width: 10px; min-height: 0; writing-mode: vertical-lr; direction: rtl; background: linear-gradient(#737678, #737678) center / 2px 100% no-repeat; }
input[type="range"]::-webkit-slider-thumb { appearance: none; width: 8px; height: 8px; border-radius: 50%; background: #fff; }

.lower { display: flex; flex-direction: column; min-height: 0; }
.mixer { display: flex; flex: 1; flex-direction: column; padding: 7px 6px 6px; }
.mix-tools { display: flex; flex: none; justify-content: space-between; height: 30px; border-bottom: 1px solid #58595c; }
.mix-left, .mix-right { display: flex; gap: 5px; width: 105px; }
.mix-right { justify-content: end; }
.mix-mid { display: flex; gap: 5px; padding-left: 34px; }
.link { width: 100px; margin-right: 5px; }
.sus { width: 100px; margin-right: 5px; }
.qlink { width: 63px; }
.width { width: 138px; }
.width output { flex: 1; background: #17181a; text-align: center; line-height: 23px; }
.mix-body { display: flex; flex: 1; min-height: 0; }
.mix-main { display: flex; flex: 1; flex-direction: column; min-width: 0; margin-right: 1px; }
.racks { display: flex; flex: 1; min-height: 0; overflow: hidden; padding-top: 4px; }
.strip { flex: none; width: 91px; border-right: 1px solid #060708; }
.rack { display: flex; align-items: center; height: 19px; margin: 0 2px 0 1px; border: 1px solid #17181a; border-radius: 2px; background: #505356; font-size: 12px; font-weight: bold; color: #c5c6c8; }
.rack span { flex: 1; padding-left: 4px; }
.rack .icon { width: 13px; height: 13px; margin: 0 3px; }
.rack.split span { line-height: 17px; border-right: 1px solid #222427; }
.rack.inserts { margin-top: 8px; }
.slot { height: 18px; margin: 8px 2px 11px; border: 1px solid #1a1b1d; background: #222325; }
.slot.big { height: 36px; margin-bottom: 3px; }
.slot.none { visibility: hidden; }
.rule { height: 2px; margin: 0; border: 0; background: #0c0d0e; }
.rule + .rack { margin-top: 9px; }
.split-h { display: flex; flex: none; justify-content: center; height: 2px; background: #6d7072; }
.split-h i { width: 24px; height: 2px; background: repeating-linear-gradient(90deg, #fff 0 4px, #25282b 4px 6px); }
.faders { display: flex; flex: none; height: 279px; }
.faders .strip { display: flex; flex-direction: column; padding-top: 4px; }
.quad { display: grid; flex: none; grid-template-columns: 41px 41px; grid-auto-rows: 18px; gap: 1px; width: 83px; margin: 0 3px; border-radius: 2px; outline: 1px solid #17181a; background: #17181a; font-size: 12px; font-weight: bold; color: #c5c6c8; }
.quad > * { background: #2e3134; font-weight: bold; }
.quad .icon { width: 14px; height: 14px; }
.quad .dim { font-weight: normal; color: #75787a; }
.pan { display: flex; flex: none; flex-direction: column; align-items: center; height: 18px; margin: 5px 4px 8px; padding-top: 3px; border-radius: 2px; background: #17181a; font-size: 10px; line-height: 13px; font-weight: bold; color: #eee; }
.pan i { width: 4px; height: 2px; background: #fff; }
.level { display: flex; flex: none; gap: 2px; height: 79px; margin: 0 3px; }
.fader, .meter { display: flex; width: 41px; border: 1px solid #1a1b1d; background: #1e1f21; }
.fader input { flex: none; width: 11px; height: 67px; margin: 5px 0; background: linear-gradient(#0a0a0b, #0a0a0b) 6px 0 / 2px 100% no-repeat; }
.fader input::-webkit-slider-thumb { width: 10px; height: 24px; border-radius: 2px; background: repeating-linear-gradient(#f23a42 0 2px, #c4202a 2px 3px); }
.fader svg { width: 29px; height: 79px; }
.meter svg { width: 40px; height: 74px; }
.level path { stroke: #55585a; fill: none; }
.level text { font-size: 8px; fill: #c3c4c6; }
.meter text { fill: #75787a; }
.values { display: flex; flex: none; height: 19px; margin: 6px 4px 6px 3px; border: 1px solid #17181a; border-radius: 2px; font-size: 11px; line-height: 17px; text-align: center; }
.values span { flex: 1; }
.values span + span { background: #3a3d40; }
.io { display: flex; flex: 1; align-items: center; gap: 8px; padding: 3px 12px 0 4px; color: #c5c6c8; }
.io .icon { width: 12px; height: 12px; }
.io span { margin-left: auto; }
.name { flex: none; height: 34px; padding: 7px 3px; background: #6a6d70; font-size: 13px; color: #f0f0f0; }
.mix-scroll { display: flex; flex: none; flex-direction: column; align-items: center; gap: 5px; width: 12px; margin: 4px 0 14px; padding: 2px 0; background: #414447; color: #fff; }
.mix-scroll b { flex: 1; width: 8px; margin-bottom: 18px; border-radius: 2px; background: #f4f4f4; }
.mix-scroll .icon { width: 10px; height: 10px; }
.lower-tabs { height: 21px; }
.lower-tabs .tab { padding: 2px 20px 0; }
.close { width: 18px; }
.close .icon { width: 13px; height: 13px; }
.lower-tabs .tab.mix-tab { width: 110px; height: 23px; padding: 5px 0 0; border-radius: 0 0 4px 4px; }

.media .tab { padding: 0 0 3px; }
.media .tab.on { width: 58px; padding: 0 0 5px; border-color: #fff; border-radius: 4px 4px 0 0; }
.media .tab:first-child { width: 56px; }
.media .tab:nth-child(3) { width: 48px; }
.media .tab:last-child { padding-left: 17px; }
.media .body { padding: 6px 7px; border-color: #fff; }
.search-row { display: flex; gap: 4px; height: 21px; }
.search { display: flex; flex: 1; align-items: center; min-width: 0; padding-left: 3px; border: 1px solid #55585b; border-radius: 3px; background: #17181a; }
.search .icon { width: 14px; height: 14px; }
.search input { flex: 1; min-width: 0; padding: 0 3px; border: 0; background: none; font-size: 11px; }
.search input::placeholder { color: #9b9d9f; opacity: 1; }
.list-btn { width: 25px; height: 21px; }
.crumbs { display: flex; align-items: center; height: 31px; border-bottom: 1px solid #77797b; }
.back { width: 20px; height: 20px; border: 1px solid #2f3235; border-radius: 3px; color: #66696b; }
.home { width: 24px; }
.crumbs .icon { width: 15px; height: 15px; }
.tiles { display: grid; grid-template-columns: 108px 108px; justify-content: center; row-gap: 24px; padding: 37px 4px 0 0; }
.tile { flex-direction: column; height: 100px; font-size: 12px; color: #f4f4f4; }
.tile svg, .fx { flex: none; width: 70px; height: 70px; margin-bottom: 10px; border-radius: 2px; background: #a8acaf; color: #25282b; }
.fx { font-size: 38px; line-height: 70px; font-weight: bold; }
.tile span:last-child { line-height: 20px; }

.transport { display: flex; flex: none; align-items: center; height: 40px; padding: 0 4px; color: #d9dadb; }
.transport > .single { margin-right: 5px; }
.duo { width: 44px; }
.grip { flex: none; width: 2px; height: 14px; margin: 0 6px 0 3px; background: repeating-linear-gradient(#d0d1d2 0 2px, transparent 2px 4px); }
.grip.end { margin-right: 1px; }
.aq { width: 38px; }
.aq + .locator { margin-left: 184px; }
.time { width: 150px; }
.time input, .tempo input { flex: 1; min-width: 0; padding: 0 6px; border: 0; background: none; text-align: right; }
.time input { font-size: 16px; }
.right-locator { margin: 0 5px 0 10px; }
.lockset { width: 75px; }
.lockset .icon { width: 15px; height: 15px; }
.keys { width: 200px; height: 32px; border: 2px solid #c5c6c9; background: #606265; color: #eee; }
.keys .pressed { background: #a2a6ac; color: #1a1b1d; }
.pre { margin-right: 5px; }
.ruled { border-right: 1px solid #55585b; }
.tempo { width: 182px; }
.tempo .step { align-self: center; width: 16px; height: 16px; margin-right: 4px; }
.group > .tap { flex: 0 0 50px; }
.metro { width: 44px; }
.metro button + button { border-left: 1px solid #55585b; }
.metro .icon { width: 15px; height: 15px; }
.monitor { width: 89px; }
.monitor span { flex: 1; }
.monitor span:first-child { flex: 0 0 26px; border-right: 1px solid #55585b; }

.cursor { position: absolute; top: 112px; left: 62px; width: 14px; height: 20px; }
.mark {
  position: absolute;
  transform: rotate(25deg);
  transform-origin: 0 52px;
  font: bold 63px/1 "Liberation Serif", serif;
  color: #d5d8da;
  opacity: .86;
  pointer-events: none;
}
.mark-top { top: -63px; left: 807px; }
.mark-mixer { top: 622px; left: 363px; }
.mark-media { top: 325px; left: 1726px; }
</style>
